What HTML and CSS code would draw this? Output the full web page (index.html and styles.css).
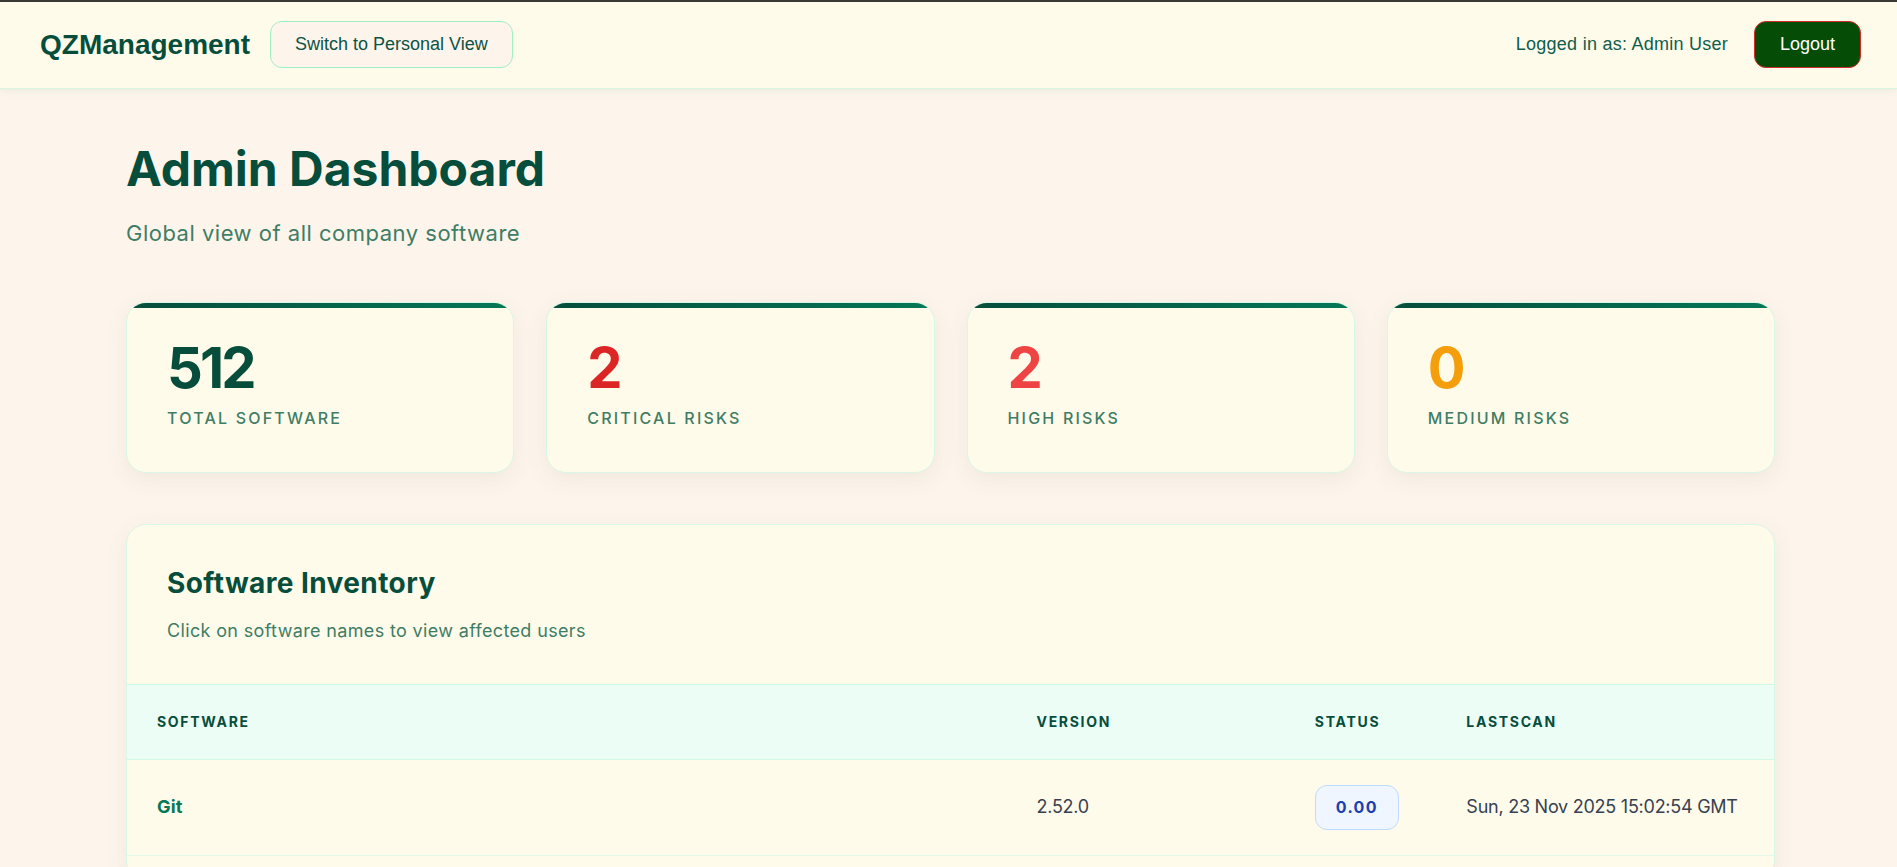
FILE: index.html
```html
<!DOCTYPE html>
<html lang="en">
<head>
<meta charset="utf-8">
<title>QZManagement - Admin Dashboard</title>
<link rel="stylesheet" href="styles.css">
</head>
<body>
<header class="topbar">
  <div class="topbar-left">
    <div class="logo">QZManagement</div>
    <button class="btn-switch">Switch to Personal View</button>
  </div>
  <div class="topbar-right">
    <span class="user">Logged in as: Admin User</span>
    <button class="btn-logout">Logout</button>
  </div>
</header>

<main class="container">
  <section class="page-head">
    <h1 class="title">Admin Dashboard</h1>
    <p class="subtitle">Global view of all company software</p>
  </section>

  <section class="stats">
    <div class="stat-card">
      <div class="stat-num num-total">512</div>
      <div class="stat-label">Total Software</div>
    </div>
    <div class="stat-card">
      <div class="stat-num num-critical">2</div>
      <div class="stat-label">Critical Risks</div>
    </div>
    <div class="stat-card">
      <div class="stat-num num-high">2</div>
      <div class="stat-label">High Risks</div>
    </div>
    <div class="stat-card">
      <div class="stat-num num-medium">0</div>
      <div class="stat-label">Medium Risks</div>
    </div>
  </section>

  <section class="panel">
    <div class="panel-head">
      <h2 class="panel-title">Software Inventory</h2>
      <p class="panel-sub">Click on software names to view affected users</p>
    </div>
    <table class="inv">
      <colgroup>
        <col class="c-sw">
        <col class="c-ver">
        <col class="c-status">
        <col class="c-scan">
      </colgroup>
      <thead>
        <tr>
          <th>Software</th>
          <th>Version</th>
          <th>Status</th>
          <th>Lastscan</th>
        </tr>
      </thead>
      <tbody>
        <tr>
          <td><a class="sw-link" href="#">Git</a></td>
          <td>2.52.0</td>
          <td><span class="badge">0.00</span></td>
          <td>Sun, 23 Nov 2025 15:02:54 GMT</td>
        </tr>
      </tbody>
    </table>
  </section>
</main>
</body>
</html>
```

FILE: styles.css
```css
* {
  box-sizing: border-box;
}

html, body {
  margin: 0;
  padding: 0;
}

body {
  background: #fdf5ec;
  font-family: Inter, "Noto Sans", sans-serif;
  color: #064e3b;
}

/* ---------- Top bar ---------- */
.topbar {
  display: flex;
  align-items: center;
  justify-content: space-between;
  background: #fefbea;
  border-top: 2px solid #3a3a34;
  padding: 19px 36px 20px 40px;
  box-shadow: 0 1px 0 #d8f5e4, 0 3px 8px rgba(6, 95, 70, 0.07);
  font-family: "Liberation Sans", Arial, sans-serif;
}

.topbar-left,
.topbar-right {
  display: flex;
  align-items: center;
}

.topbar-left {
  gap: 20px;
}

.topbar-right {
  gap: 26px;
}

.logo {
  font-size: 28px;
  font-weight: 700;
  color: #064e3b;
  line-height: 32px;
}

.btn-switch {
  font-family: "Liberation Sans", Arial, sans-serif;
  font-size: 18px;
  line-height: 21px;
  color: #0b5345;
  background: #fdf5ec;
  border: 1px solid #9feec6;
  border-radius: 12px;
  padding: 12px 24px;
}

.user {
  font-size: 18px;
  color: #0f5e4c;
  letter-spacing: 0.25px;
}

.btn-logout {
  font-family: "Liberation Sans", Arial, sans-serif;
  font-size: 18px;
  line-height: 21px;
  color: #ffffff;
  background: #054d07;
  border: 1px solid #d42a2a;
  border-radius: 12px;
  padding: 12px 25px;
}

/* ---------- Main ---------- */
.container {
  max-width: 1653px;
  margin: 0 auto;
  padding: 52px 0 40px 4px;
}

.page-head {
  margin-bottom: 52px;
}

.title {
  margin: 0;
  font-size: 48px;
  font-weight: 700;
  line-height: 1.2;
  letter-spacing: 0;
  color: #064e3b;
}

.subtitle {
  margin: 19px 0 0;
  font-size: 22px;
  line-height: 1.5;
  letter-spacing: 0.5px;
  color: #3f7d65;
}

/* ---------- Stats ---------- */
.stats {
  display: grid;
  grid-template-columns: repeat(4, 1fr);
  gap: 32px;
  margin-bottom: 51px;
}

.stat-card {
  position: relative;
  overflow: hidden;
  background: #fefbea;
  border: 1px solid #d9f7e6;
  border-radius: 20px;
  padding: 37px 40px 42px;
  box-shadow: 0 6px 22px rgba(90, 80, 40, 0.08);
}

.stat-card::before {
  content: "";
  position: absolute;
  left: 0;
  right: 0;
  top: 0;
  height: 5px;
  background: linear-gradient(90deg, #064e3b, #047857);
}

.stat-num {
  font-size: 56px;
  font-weight: 700;
  line-height: 1;
  letter-spacing: -0.05em;
  margin-bottom: 10px;
}

.num-total { color: #064e3b; }
.num-critical { color: #dc2626; }
.num-high { color: #ef4444; }
.num-medium { color: #f59e0b; }

.stat-label {
  font-size: 16px;
  font-weight: 500;
  line-height: 24px;
  letter-spacing: 2.2px;
  text-transform: uppercase;
  color: #3f7d65;
}

/* ---------- Inventory panel ---------- */
.panel {
  background: #fefbea;
  border: 1px solid #d9f7e6;
  border-radius: 20px;
  overflow: hidden;
  padding-bottom: 24px;
  box-shadow: 0 6px 22px rgba(90, 80, 40, 0.08);
}

.panel-head {
  padding: 40px 40px 38px;
}

.panel-title {
  margin: 0;
  font-size: 28px;
  font-weight: 700;
  line-height: 1.3;
  letter-spacing: 0.4px;
  color: #064e3b;
}

.panel-sub {
  margin: 16px 0 0;
  font-size: 18px;
  line-height: 1.6;
  letter-spacing: 0.35px;
  color: #3f7d65;
}

.inv {
  width: 100%;
  border-collapse: collapse;
  table-layout: fixed;
}

.c-sw { width: 53.4%; }
.c-ver { width: 16.9%; }
.c-status { width: 9.2%; }
.c-scan { width: 20.5%; }

.inv th {
  background: #ecfdf5;
  border-top: 1px solid #d1fae5;
  border-bottom: 1px solid #d1fae5;
  padding: 26px 30px 27px;
  text-align: left;
  font-size: 14px;
  font-weight: 700;
  line-height: 21px;
  letter-spacing: 1.7px;
  text-transform: uppercase;
  color: #064e3b;
}

.inv td {
  padding: 25px 30px;
  border-bottom: 1px solid #e3f7ea;
  vertical-align: middle;
  font-size: 18px;
  line-height: 24px;
  letter-spacing: -0.25px;
  white-space: nowrap;
  color: #374151;
}

.sw-link {
  color: #047857;
  font-weight: 700;
  letter-spacing: 0.2px;
  text-decoration: none;
}

.badge {
  display: inline-block;
  padding: 12px 20px;
  font-size: 16px;
  font-weight: 700;
  line-height: 19px;
  letter-spacing: 0.08em;
  color: #1e40af;
  background: #eff6ff;
  border: 1px solid #bfdbfe;
  border-radius: 12px;
}
```
